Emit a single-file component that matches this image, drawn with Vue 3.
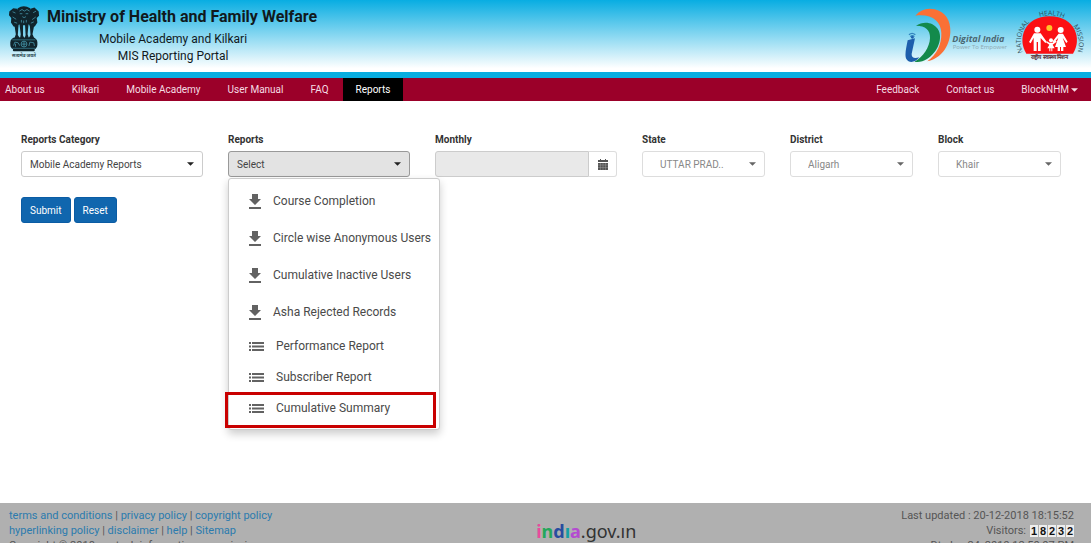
<script setup>
import { ref } from 'vue'

const leftNav = ['About us', 'Kilkari', 'Mobile Academy', 'User Manual', 'FAQ', 'Reports']
const downloads = ['Course Completion', 'Circle wise Anonymous Users', 'Cumulative Inactive Users', 'Asha Rejected Records']
const lists = ['Performance Report', 'Subscriber Report', 'Cumulative Summary']
const areas = [
  { id: 'state', label: 'State', value: 'UTTAR PRAD..' },
  { id: 'district', label: 'District', value: 'Aligarh' },
  { id: 'block', label: 'Block', value: 'Khair' },
]
const visitors = '18232'
const open = ref(true)
const selected = ref('Select')
const month = ref('')

function choose(name) {
  selected.value = name
  open.value = false
}
function reset() {
  selected.value = 'Select'
  open.value = true
}
</script>

<template>
  <div class="page">
    <header class="banner">
      <svg class="emblem" viewBox="24 14 98 162" role="img" aria-label="State Emblem of India">
        <g fill="#10242c">
          <path d="M54 22Q72 10 92 22L98 40L94 66L84 74H62L52 66L47 40Z" />
          <path d="M52 24L40 22L28 32L27 44L34 52L33 66L41 78L54 80L62 62L56 38Z" />
          <path d="M93 24L105 20L118 32L119 45L112 52L114 66L106 78L92 80L84 62L90 38Z" />
          <path d="M44 76H56L54 104L60 113H44L48 102ZM59 70H70V106L74 114H61L63 102ZM76 70H87L84 102L88 114H75L78 104ZM91 76H104L99 102L104 113H88L93 104Z" />
          <rect x="31" y="112" width="83" height="37" rx="15" />
          <rect x="39" y="146" width="67" height="8" rx="3" />
        </g>
        <g fill="none" stroke="#51aec5" stroke-width="2">
          <path d="M59 31L67 26L74 31L82 26L90 31M60 39H68M78 39H86M68 48Q73 54 79 48M38 33L47 37M101 36L110 31M38 49L49 56M98 57L109 49M65 58V66M72 60V68M80 58V66M43 65L52 68M94 68L103 64" />
          <path d="M37 119H108M37 145H108" stroke-width="1.5" />
          <circle cx="73" cy="132" r="9" />
          <path d="M73 124V140M65 132H81M41 137L45 126L55 128L60 137M47 131V140M88 138L91 126L103 128L105 138" />
        </g>
        <text x="73" y="173" text-anchor="middle" font-size="14" font-weight="700" fill="#28464e">सत्यमेव जयते</text>
      </svg>
      <div class="titles">
        <h1>Ministry of Health and Family Welfare</h1>
        <p>Mobile Academy and Kilkari</p>
        <p>MIS Reporting Portal</p>
      </div>
      <div class="logos">
        <svg class="digital" viewBox="42 18 312 168" role="img" aria-label="Digital India">
          <path d="M76 44C92 26 111 20 134 25C166 32 183 60 181 93C179 138 150 174 112 181C141 159 155 130 154 96C153 61 126 38 76 44Z" fill="#fa7035" />
          <path d="M78 74C100 59 129 63 143 83C161 110 143 154 111 174C99 182 86 184 73 182C100 168 119 138 120 111C121 87 107 74 78 74Z" fill="#138a4b" />
          <path d="M53 118L75 112L65 158C64 171 73 174 88 169C76 185 57 188 49 174C43 163 49 139 53 118Z" fill="#1d5eac" />
          <path d="M57 101Q66 93 76 101M61 107Q67 101 73 107" fill="none" stroke="#3184bd" stroke-width="4" />
          <circle cx="67" cy="109" r="4" fill="#1d5eac" />
          <text x="187" y="124" font-size="27" font-weight="700" font-style="italic" fill="#4b6873">Digital India</text>
          <text x="188" y="145" font-size="18" fill="#8ea9b2">Power To Empower</text>
        </svg>
        <svg class="nhm" viewBox="380 24 198 156" role="img" aria-label="National Health Mission">
          <path id="nhm-arc" d="M398 159C378 112 405 46 478 46C551 46 578 112 560 159" fill="none" />
          <path d="M408 161C380 118 401 49 478 49C555 49 576 118 548 161Z" fill="#fb1014" />
          <circle cx="477" cy="84" r="9" fill="#ffc329" />
          <g fill="#fff">
            <circle cx="441" cy="89" r="9" /><circle cx="511" cy="90" r="9" /><circle cx="482" cy="121" r="6" />
            <path d="M431 100H451L469 125L465 129L451 114V153H443V126H439V153H430V113L421 130L416 126Z" />
            <path d="M505 101H518L532 125L528 129L517 113L527 141H519V153H512V141H509V153H502V141H494L504 113L490 129L486 125Z" />
            <path d="M477 128H487L496 121L499 125L487 134L493 145H486V154H483V145H480V154H477V145H471L477 134L467 127L470 124Z" />
          </g>
          <g font-size="20" fill="#314c57">
            <text><textPath href="#nhm-arc" startOffset="2">NATIONAL</textPath></text>
            <text text-anchor="middle"><textPath href="#nhm-arc" startOffset="52%">HEALTH</textPath></text>
            <text text-anchor="end"><textPath href="#nhm-arc" startOffset="99%">MISSION</textPath></text>
          </g>
          <text x="478" y="177" text-anchor="middle" font-size="17" font-weight="700" fill="#562f36">राष्ट्रीय स्वास्थ्य मिशन</text>
        </svg>
      </div>
    </header>

    <nav class="nav">
      <a v-for="item in leftNav" :key="item" href="#" :class="{ active: item === 'Reports' }">{{ item }}</a>
      <span class="spacer"></span>
      <a href="#">Feedback</a>
      <a href="#">Contact us</a>
      <button type="button">BlockNHM<svg class="caret" viewBox="0 0 8 4"><path d="M0 0H8L4 4Z" /></svg></button>
    </nav>

    <main>
      <form @submit.prevent>
        <div class="fields">
          <div class="field">
            <label for="category">Reports Category</label>
            <div class="picker">
              <select id="category"><option>Mobile Academy Reports</option></select>
              <svg class="caret" viewBox="0 0 8 4"><path d="M0 0H8L4 4Z" /></svg>
            </div>
          </div>
          <div class="field">
            <label for="reports">Reports</label>
            <div class="picker">
              <button id="reports" type="button" class="toggle" aria-haspopup="menu" :aria-expanded="open" @click="open = !open">{{ selected }}</button>
              <svg class="caret" viewBox="0 0 8 4"><path d="M0 0H8L4 4Z" /></svg>
              <div v-if="open" class="menu" role="menu">
                <button v-for="d in downloads" :key="d" type="button" role="menuitem" class="download" @click="choose(d)">
                  <svg viewBox="0 0 12 15"><path d="M3 0H9V5H12L6 11L0 5H3ZM0 13H12V15H0Z" /></svg>{{ d }}
                </button>
                <button v-for="l in lists" :key="l" type="button" role="menuitem" class="list" :class="{ marked: l === 'Cumulative Summary' }" @click="choose(l)">
                  <svg viewBox="0 0 15 9"><path d="M0 0H2V2H0ZM3 0H15V2H3ZM0 3.5H2V5.5H0ZM3 3.5H15V5.5H3ZM0 7H2V9H0ZM3 7H15V9H3Z" /></svg>{{ l }}
                </button>
              </div>
            </div>
          </div>
          <div class="field">
            <label for="month">Monthly</label>
            <div class="month">
              <input id="month" v-model="month" type="text" disabled>
              <button type="button" aria-label="Open calendar">
                <svg viewBox="0 0 10 11"><path d="M0 1H2V0H3V1H7V0H8V1H10V3H0ZM0 4H10V11H0Z" /><path d="M0 6H10M0 8.5H10M2.5 4V11M5 4V11M7.5 4V11" stroke="#aaa" stroke-width=".4" /></svg>
              </button>
            </div>
          </div>
          <div v-for="a in areas" :key="a.id" class="field">
            <label :for="a.id">{{ a.label }}</label>
            <div class="picker area">
              <select :id="a.id" disabled><option>{{ a.value }}</option></select>
              <svg class="caret" viewBox="0 0 8 4"><path d="M0 0H8L4 4Z" /></svg>
            </div>
          </div>
        </div>
        <div class="actions">
          <button type="submit">Submit</button>
          <button type="button" @click="reset">Reset</button>
        </div>
      </form>
    </main>

    <footer>
      <div class="policies">
        <div><a href="#">terms and conditions</a> | <a href="#">privacy policy</a> | <a href="#">copyright policy</a></div>
        <div><a href="#">hyperlinking policy</a> | <a href="#">disclaimer</a> | <a href="#">help</a> | <a href="#">Sitemap</a></div>
        <div>Copyright © 2018, motech information commission</div>
      </div>
      <a class="india" href="#" aria-label="india.gov.in"><b><span class="pink">i</span><span class="green">n</span><span class="blue">d</span><span class="teal">ı</span><span class="purple">a</span></b>.gov.ın</a>
      <div class="status">
        <div>Last updated : 20-12-2018 18:15:52</div>
        <div class="visitors">Visitors: <span class="digits"><b v-for="(n, i) in visitors" :key="i">{{ n }}</b></span></div>
        <div>Dt: Jan 24, 2019 12:50:07 PM</div>
      </div>
    </footer>
  </div>
</template>

<style>
body { margin: 0; }
</style>

<style scoped>
.page { height: 100vh; display: flex; flex-direction: column; overflow: hidden; background: #fff; color: #444; font: 10px/15px Roboto, sans-serif; }
.page * { box-sizing: border-box; }
button, select, input { font: inherit; color: inherit; }
button { cursor: pointer; }
a { text-decoration: none; }
svg { flex: none; }
.banner { height: 78px; flex: none; display: flex; align-items: flex-start; padding: 5px 8px 0; border-bottom: 6px solid #08ade0; background: linear-gradient(#08ade2, #fff 95%); }
.emblem { width: 32px; height: 54px; font-family: "Noto Sans", sans-serif; }
.titles { margin-left: 7px; color: #10191d; text-align: center; }
h1 { margin: 0 0 2px; font-size: 16px; line-height: 24px; font-weight: 700; }
.titles p { margin: 0; padding-right: 18px; font-size: 12px; line-height: 17px; }
.logos { margin-left: auto; display: flex; gap: 9px; }
.digital { width: 104px; height: 56px; margin-top: 2px; font-family: "Open Sans", sans-serif; }
.nhm { width: 66px; height: 52px; margin-top: 3px; overflow: visible; font-family: "Open Sans", sans-serif; }
.nav { height: 23px; flex: none; display: flex; gap: 1px; background: #9b0029; }
.nav a, .nav button { padding: 0 13px; line-height: 23px; color: #f5dce3; border: 0; background: none; white-space: nowrap; }
.nav a:first-child { padding-left: 5px; }
.nav .active { background: #000; color: #fff; }
.nav button { display: flex; align-items: center; gap: 2px; }
.spacer { flex: 1; }
.caret { width: 7px; height: 4px; fill: currentColor; }
main { flex: 1; min-height: 0; padding: 31px 30px 0 21px; }
.fields { display: grid; grid-template-columns: repeat(3, 182fr) repeat(3, 123fr); gap: 25px; }
.field { min-width: 0; }
.field label { display: block; margin-bottom: 4px; color: #333; font-weight: 700; }
.picker { position: relative; display: flex; align-items: center; color: #444; }
.picker select, .toggle { appearance: none; width: 100%; height: 26px; padding: 0 24px 0 8px; border: 1px solid #ccc; border-radius: 3px; background: #fff; text-align: left; opacity: 1; }
.picker .toggle { border-color: #999; background: #e3e3e3; }
.picker > .caret { position: absolute; right: 9px; color: #222; pointer-events: none; }
.picker.area select { padding-left: 17px; color: #888; border-color: #ddd; }
.area > .caret { color: #666; }
.month { display: flex; }
.month input { flex: 1; min-width: 0; height: 26px; border: 1px solid #ccc; border-radius: 3px 0 0 3px; background: #e9e9e9; }
.month button { width: 28px; height: 26px; padding: 0; border: 1px solid #ddd; border-left: 0; border-radius: 0 3px 3px 0; background: #fff; display: grid; place-items: center; }
.month svg { width: 10px; height: 11px; fill: #555; }
.menu { position: absolute; z-index: 2; top: 27px; left: 0; width: max-content; padding: 4px 0 5px; border: 1px solid #ccc; border-radius: 3px; background: #fff; box-shadow: 0 4px 9px rgba(0, 0, 0, .2); }
.menu button { position: relative; width: 100%; display: flex; align-items: center; padding: 0 8px 0 20px; border: 0; background: none; color: #4a4a4a; font-size: 12px; text-align: left; }
.menu .download { height: 37px; gap: 12px; }
.menu .list { height: 31px; gap: 12px; }
.menu svg { fill: #626262; }
.download svg { width: 12px; height: 15px; }
.list svg { width: 15px; height: 9px; }
.marked::after { content: ""; position: absolute; inset: -1px 3px -4px -4px; border: 3px solid #c90000; }
.actions { display: flex; gap: 3px; margin-top: 20px; }
.actions button { height: 26px; padding: 0 8px; border: 1px solid #0b5ca4; border-radius: 3px; background: #1066ae; color: #fff; }
footer { height: 40px; flex: none; overflow: hidden; display: grid; grid-template-columns: 49.5% auto 1fr; padding: 5px 17px 0 9px; background: #b0b0b0; color: #555; font-size: 11px; }
.policies a { color: #2b7bae; }
.status { text-align: right; }
.india { margin-top: 11px; color: #333; font: 18px/24px "Noto Sans", sans-serif; }
.pink { color: #e84b9c; }
.green { color: #24a75c; }
.blue { color: #284c9f; }
.teal { color: #159fa3; }
.purple { color: #b44bd0; }
.visitors { display: flex; justify-content: flex-end; align-items: center; gap: 4px; }
.digits { display: flex; gap: 1px; }
.digits b { width: 8px; background: #eee; color: #111; line-height: 12px; text-align: center; font-family: "Liberation Sans", sans-serif; }
</style>
